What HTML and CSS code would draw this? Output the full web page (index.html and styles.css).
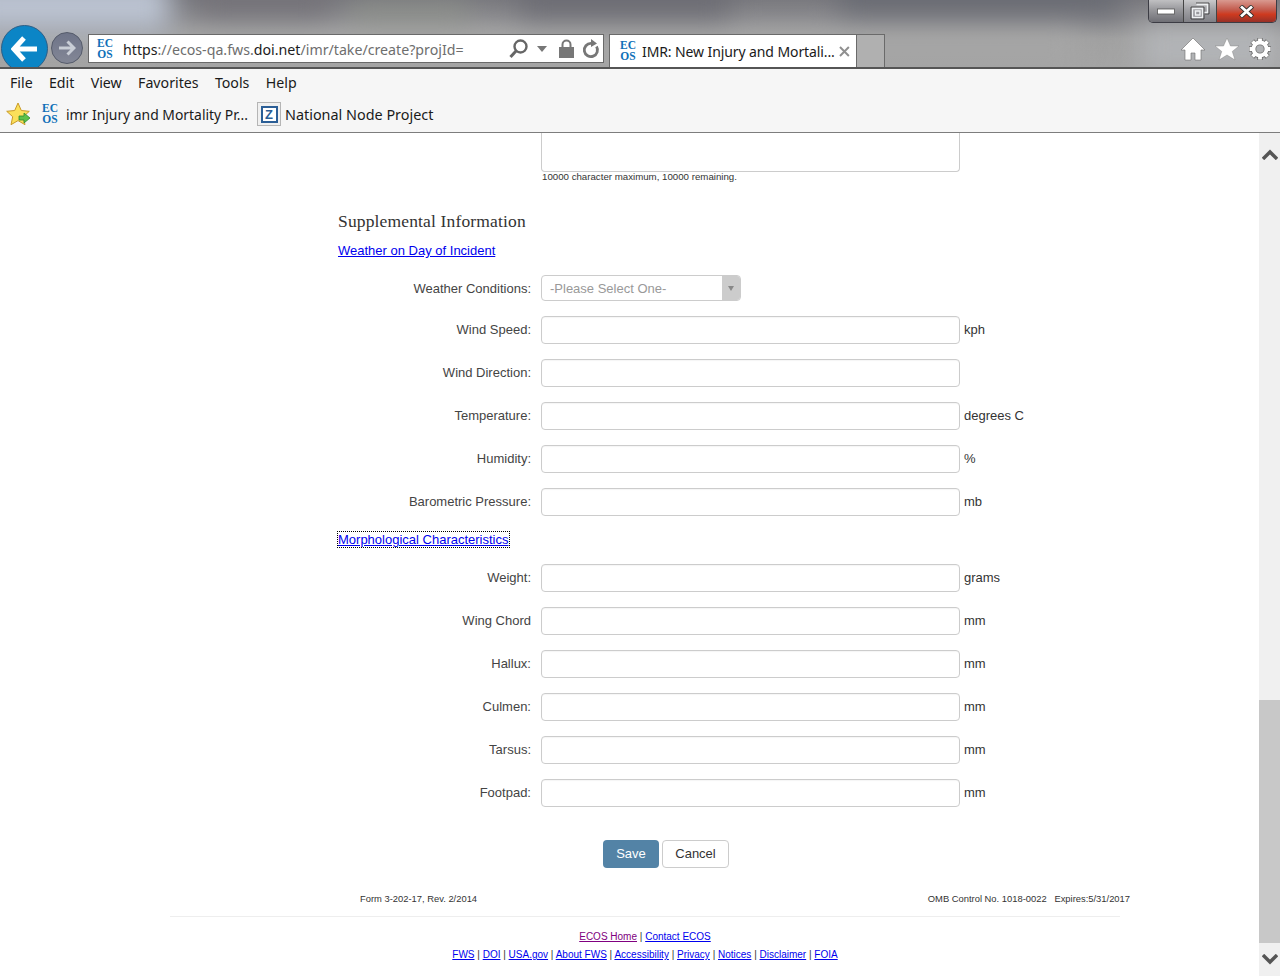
FILE: index.html
```html
<!DOCTYPE html>
<html lang="en">
<head>
<meta charset="utf-8">
<title>IMR: New Injury and Mortality</title>
<link rel="stylesheet" href="styles.css">
</head>
<body>
<header class="chrome">
  <div class="glass">
    <div class="blur-layer">
      <span class="blob b1"></span><span class="blob b2"></span><span class="blob b3"></span><span class="blob b4"></span><span class="blob b5"></span><span class="blob b6"></span><span class="blob b7"></span>
    </div>
    <div class="win-controls">
      <span class="win-btn win-min"><svg width="18" height="8" viewBox="0 0 18 8"><rect x=".5" y="2" width="17" height="5" fill="#fff" stroke="#555" stroke-width=".8"/></svg></span>
      <span class="win-btn win-max"><svg width="20" height="18" viewBox="0 0 20 18"><path d="M6 1h13v11h-4M1 5h13v12H1z" fill="none" stroke="#333" stroke-width=".8"/><path d="M6.500 2.500h11v8h-3M2.500 6.500h10v9h-10zM5.500 9h4.500v4H5.500z" fill="none" stroke="#eef0f2" stroke-width="1.400"/></svg></span>
      <span class="win-btn win-close"><svg width="17" height="13" viewBox="0 0 17 13"><path d="M2.500 1l12 11M14.500 1l-12 11" stroke="#33302e" stroke-width="4.600"/><path d="M3 1.500l11 10M14 1.500l-11 10" stroke="#fff" stroke-width="2.800"/></svg></span>
    </div>
    <div class="nav-row">
      <span class="back"><svg width="28" height="26" viewBox="0 0 28 26"><path d="M13 2L3 13l10 11M3 13h23" fill="none" stroke="#fff" stroke-width="5"/></svg></span>
      <span class="forward"><svg width="18" height="16" viewBox="0 0 18 16"><path d="M9.500 1.500L16 8l-6.500 6.500M16 8H1" fill="none" stroke="#c9ced6" stroke-width="3"/></svg></span>
      <div class="address">
        <span class="ecos ecos-addr"><span>EC</span><span>OS</span></span>
        <span class="url"><b>https</b>://ecos-qa.fws.<b>doi.net</b>/imr/take/create?projId=</span>
        <svg class="addr-search" width="20" height="20" viewBox="0 0 20 20"><circle cx="11.500" cy="7.500" r="6" fill="none" stroke="#666" stroke-width="2.400"/><path d="M7 12l-5.500 6" stroke="#666" stroke-width="3"/></svg>
        <svg class="addr-caret" width="10" height="6" viewBox="0 0 10 6"><path d="M0 0h10L5 6z" fill="#777"/></svg>
        <svg class="addr-lock" width="15" height="19" viewBox="0 0 15 19"><path d="M3.500 9V5.500a4 4 0 018 0V9" fill="none" stroke="#777" stroke-width="2"/><rect x="0" y="8" width="15" height="11" fill="#777"/></svg>
        <svg class="addr-reload" width="18" height="20" viewBox="0 0 18 20"><path d="M14.500 7.500A6.600 6.600 0 119 4.400" fill="none" stroke="#777" stroke-width="2.800"/><path d="M9 0l6 4.500L9 8z" fill="#777"/></svg>
      </div>
      <div class="tab">
        <span class="ecos ecos-tab"><span>EC</span><span>OS</span></span>
        <span class="tab-title">IMR: New Injury and Mortali...</span>
        <svg width="11" height="11" viewBox="0 0 11 11"><path d="M1 1l9 9M10 1l-9 9" stroke="#8f8f8f" stroke-width="2"/></svg>
      </div>
      <span class="new-tab"></span>
      <div class="tools">
        <svg width="26" height="24" viewBox="0 0 26 24"><path d="M13 1L1 13h4v10h6v-7h4v7h6V13h4z" fill="#fff" stroke="#6b6b6b" stroke-width=".6"/></svg>
        <svg width="24" height="23" viewBox="0 0 24 23"><path d="M12 0l3.500 8H24l-6.700 5.400L20 22l-8-5-8 5 2.700-8.600L0 8h8.500z" fill="#fff" stroke="#7a7a7a" stroke-width=".4"/></svg>
        <svg width="24" height="24" viewBox="0 0 24 24"><g stroke="#6e6e6e" stroke-width="5.400" fill="none"><circle cx="12" cy="12" r="6.500"/><path d="M12 1v4M12 19v4M1 12h4M19 12h4M4.200 4.200l2.800 2.800M17 17l2.800 2.800M19.800 4.200L17 7M7 17l-2.800 2.800"/></g><g stroke="#fff" stroke-width="3.800" fill="none"><circle cx="12" cy="12" r="6.500"/><path d="M12 1.500v4M12 18.500v4M1.500 12h4M18.500 12h4M4.500 4.500l2.800 2.800M16.700 16.700l2.800 2.800M19.500 4.500l-2.800 2.800M7.300 16.700l-2.800 2.800"/></g></svg>
      </div>
    </div>
  </div>
  <nav class="menu-row">
    <span>File</span><span>Edit</span><span>View</span><span>Favorites</span><span>Tools</span><span>Help</span>
  </nav>
  <div class="fav-row">
    <svg class="fav-star" width="26" height="25" viewBox="0 0 26 25"><path d="M12 1l3.300 7.500 8 .8-6 5.400 1.700 8-7-4.100-7 4.100 1.700-8-6-5.400 8-.8z" fill="#fbe05a" stroke="#c99a28"/><path d="M13 14h5v-3l6 5-6 5v-3h-5z" fill="#5dc14a" stroke="#2f8a2c" stroke-width=".8"/></svg>
    <span class="ecos ecos-fav"><span>EC</span><span>OS</span></span>
    <span class="fav-text fav-first">imr Injury and Mortality Pr...</span>
    <span class="z-icon"><span>Z</span></span>
    <span class="fav-text">National Node Project</span>
  </div>
</header>

<div class="viewport">
  <main class="page">
    <div class="form-col">
      <div class="textarea-stub"></div>
      <p class="char-count">10000 character maximum, 10000 remaining.</p>
      <h2>Supplemental Information</h2>
      <p class="section-link first-link"><a href="#">Weather on Day of Incident</a></p>
      <div class="row row-select">
        <label>Weather Conditions:</label>
        <div class="select"><span>-Please Select One-</span><i><svg width="6" height="5" viewBox="0 0 6 5"><path d="M0 0h6L3 5z" fill="#888"/></svg></i></div>
      </div>
      <div class="row"><label>Wind Speed:</label><span class="input"></span><span class="unit">kph</span></div>
      <div class="row"><label>Wind Direction:</label><span class="input"></span></div>
      <div class="row"><label>Temperature:</label><span class="input"></span><span class="unit">degrees C</span></div>
      <div class="row"><label>Humidity:</label><span class="input"></span><span class="unit">%</span></div>
      <div class="row"><label>Barometric Pressure:</label><span class="input"></span><span class="unit">mb</span></div>
      <p class="section-link morph-link"><a href="#" class="focused">Morphological Characteristics</a></p>
      <div class="row"><label>Weight:</label><span class="input"></span><span class="unit">grams</span></div>
      <div class="row"><label>Wing Chord</label><span class="input"></span><span class="unit">mm</span></div>
      <div class="row"><label>Hallux:</label><span class="input"></span><span class="unit">mm</span></div>
      <div class="row"><label>Culmen:</label><span class="input"></span><span class="unit">mm</span></div>
      <div class="row"><label>Tarsus:</label><span class="input"></span><span class="unit">mm</span></div>
      <div class="row"><label>Footpad:</label><span class="input"></span><span class="unit">mm</span></div>
      <div class="actions"><span class="btn btn-save">Save</span><span class="btn btn-cancel">Cancel</span></div>
    </div>
    <div class="form-meta"><span>Form 3-202-17, Rev. 2/2014</span><span>OMB Control No. 1018-0022 &nbsp; Expires:5/31/2017</span></div>
    <footer class="site-foot">
      <p><a href="#" class="visited">ECOS Home</a> | <a href="#">Contact ECOS</a></p>
      <p><a href="#">FWS</a> | <a href="#">DOI</a> | <a href="#">USA.gov</a> | <a href="#">About FWS</a> | <a href="#">Accessibility</a> | <a href="#">Privacy</a> | <a href="#">Notices</a> | <a href="#">Disclaimer</a> | <a href="#">FOIA</a></p>
    </footer>
  </main>
  <aside class="scrollbar">
    <span class="arrow"><svg width="16" height="11" viewBox="0 0 16 11"><path d="M1 10l7-7 7 7" fill="none" stroke="#555" stroke-width="3.400"/></svg></span>
    <span class="track"><span class="thumb"></span></span>
    <span class="arrow arrow-down"><svg width="16" height="11" viewBox="0 0 16 11"><path d="M1 1l7 7 7-7" fill="none" stroke="#555" stroke-width="3.400"/></svg></span>
  </aside>
</div>
</body>
</html>
```
FILE: styles.css
```css
* { box-sizing: border-box; }
html, body { margin: 0; height: 976px; overflow: hidden; background: #fff; }
body { display: flex; flex-direction: column; font-family: "Liberation Sans", Arial, sans-serif; }
a { color: #0000ee; }
p { margin: 0; }

.chrome { height: 133px; flex: none; background: #f6f6f6; border-bottom: 1px solid #7d7d7d; font-family: "Noto Sans", "Open Sans", sans-serif; color: #1a1a1a; }
.glass { position: relative; height: 69px; overflow: hidden; border-bottom: 2px solid #555; background: linear-gradient(#7a7a7f 0, #88888c 25%, #a2a2a2 58%, #a4a4a4 100%); }
.blur-layer { position: absolute; inset: -30px; filter: blur(14px); }
.blob { position: absolute; display: block; }
.b1 { left: 0; top: 10px; width: 200px; height: 52px; background: #bcc4d2; }
.b2 { left: 230px; top: 0; width: 130px; height: 46px; background: #757379; }
.b3 { left: 380px; top: 34px; width: 120px; height: 16px; background: #8f938a; }
.b4 { left: 550px; top: 0; width: 210px; height: 48px; background: #6d6d74; }
.b5 { left: 870px; top: 0; width: 280px; height: 44px; background: #696b73; }
.b6 { left: 1170px; top: 56px; width: 140px; height: 44px; background: #b3b5b8; }
.b7 { left: 210px; top: 62px; width: 900px; height: 30px; background: #a6a6a6; }

.win-controls { position: absolute; top: 0; right: 3px; display: flex; height: 23px; border: 1px solid #3c3c44; border-top: 0; border-radius: 0 0 5px 5px; overflow: hidden; }
.win-btn { display: flex; align-items: center; justify-content: center; height: 22px; }
.win-min { width: 35px; background: linear-gradient(#c0c0c2, #97979b 45%, #6f6f75); border-right: 1px solid #444; }
.win-max { width: 33px; background: linear-gradient(#c9c9cb, #a0a0a4 45%, #808086); border-right: 1px solid #444; }
.win-close { flex: none; width: 59px; background: linear-gradient(#d99a90, #c35a4c 45%, #cf3a1f 65%, #973027); }

.nav-row { position: relative; display: flex; align-items: flex-start; height: 67px; padding: 25px 0 0 1px; }
.back { flex: none; display: flex; align-items: center; justify-content: center; width: 47px; height: 47px; border-radius: 50%; background: #0b85c6; border: 1px solid #2c5e86; }
.forward { flex: none; display: flex; align-items: center; justify-content: center; width: 32px; height: 32px; margin: 7px 0 0 3px; border-radius: 50%; background: linear-gradient(#6e7488, #838796); border: 1px solid #555b6a; }
.address { flex: none; display: flex; align-items: center; width: 516px; height: 29px; margin: 9px 0 0 5px; padding-left: 7px; background: #fff; border: 1px solid #6a6a6a; }
.url { width: 376px; margin-left: 9px; padding-top: 2px; font-size: 14.200px; white-space: nowrap; color: #6e6e6e; }
.url b { font-weight: 400; color: #1c1c1c; }
.addr-search { margin-left: 10px; }
.addr-caret { margin-left: 8px; }
.addr-lock { margin-left: 12px; }
.addr-reload { margin-left: 8px; }
.ecos { display: block; flex: none; width: 18px; font-family: "Liberation Serif", serif; font-weight: 700; color: #0f6fb8; font-size: 11.500px; line-height: 11px; text-align: center; }
.ecos span { display: block; }
.tab { flex: none; display: flex; align-items: center; width: 248px; height: 35px; margin: 9px 0 0 5px; padding: 0 6px 2px 9px; background: #fff; border: 1px solid #6a6a6a; border-bottom: 0; }
.tab-title { margin-left: 5px; margin-right: 4px; width: 196px; font-size: 14px; white-space: nowrap; overflow: hidden; letter-spacing: -.1px; }
.new-tab { flex: none; width: 28px; height: 34px; margin-top: 9px; background: #b0b0b0; border: 1px solid #6a6a6a; border-left: 0; border-bottom: 0; }
.tools { flex: none; display: flex; align-items: center; gap: 9px; margin: 12px 0 0 295px; }

.menu-row { display: flex; gap: 16.300px; height: 30px; padding: 4px 0 0 10px; font-size: 14.200px; line-height: 20px; }
.fav-row { display: flex; align-items: center; height: 33px; padding: 0 0 3px 6px; font-size: 14.400px; }
.ecos-fav { margin-left: 9px; }
.fav-text { white-space: nowrap; }
.fav-first { width: 191px; margin-left: 7px; font-size: 13.900px; }
.z-icon { flex: none; display: flex; align-items: center; justify-content: center; width: 24px; height: 24px; margin-right: 4px; border: 1px solid #b5b5b5; background: #f0f0f0; }
.z-icon span { display: block; width: 17px; height: 17px; border: 2px solid #2b5e96; background: #fff; color: #2b5e96; font: 700 13px/13px "Liberation Sans", sans-serif; text-align: center; }

.viewport { flex: 1; display: flex; min-height: 0; }
.page { flex: 1; min-width: 0; overflow: hidden; font-size: 13px; color: #333; }
.form-col { padding-left: 338px; }
.textarea-stub { width: 419px; height: 39px; margin-left: 203px; border: 1px solid #ccc; border-top: 0; border-radius: 0 0 4px 4px; }
.char-count { margin: 0 0 0 204px; font-size: 9.700px; line-height: 9px; height: 15px; color: #333; }
h2 { margin: 22px 0 0; font: 400 17.500px/24px "Liberation Serif", Georgia, serif; color: #333; letter-spacing: .15px; }
.section-link { font-size: 13px; line-height: 20px; }
.first-link { margin-top: 8px; }
.morph-link { margin: -1px 0 14px; }
.focused { outline: 1px dotted #000; outline-offset: 0; display: inline-block; line-height: 15px; }
.row { display: flex; align-items: center; height: 28px; margin-bottom: 15px; }
.row label { width: 193px; padding-bottom: 2px; text-align: right; margin-right: 10px; color: #444; }
.input { display: block; width: 419px; height: 28px; border: 1px solid #ccc; border-radius: 4px; box-shadow: inset 0 1px 1px rgba(0,0,0,.04); }
.unit { margin-left: 4px; padding-bottom: 2px; }
.row-select { height: 26px; margin: 14px 0 15px; }
.row-select label { padding-bottom: 0; }
.select { display: flex; justify-content: space-between; width: 200px; height: 26px; border: 1px solid #ccc; border-radius: 4px; color: #999; line-height: 26px; padding-left: 8px; overflow: hidden; }
.select i { display: flex; align-items: center; justify-content: center; width: 18px; background: #ccc; }
.actions { display: flex; gap: 3px; margin: 33px 0 0 265px; height: 28px; }
.btn { display: flex; align-items: center; justify-content: center; height: 28px; padding-bottom: 1px; border-radius: 4px; }
.btn-save { width: 56px; background: #5383a6; color: #fff; }
.btn-cancel { width: 67px; border: 1px solid #ccc; color: #333; }
.form-meta { display: flex; justify-content: space-between; width: 770px; margin: 25px 0 0 360px; height: 12px; font-size: 9.400px; line-height: 12px; color: #333; }
.site-foot { width: 950px; margin: 11px 0 0 170px; padding-top: 13px; border-top: 1px solid #eee; text-align: center; font-size: 10px; color: #333; }
.site-foot p { height: 18px; line-height: 14px; }
.visited { color: #800080; }

.scrollbar { flex: none; display: flex; flex-direction: column; width: 21px; background: #f0f0f0; }
.arrow { flex: none; display: flex; align-items: center; justify-content: center; height: 43px; }
.arrow-down { height: 33px; }
.track { flex: 1; display: flex; flex-direction: column; justify-content: flex-end; }
.thumb { display: block; height: 243px; background: #c8c8c8; }
```
